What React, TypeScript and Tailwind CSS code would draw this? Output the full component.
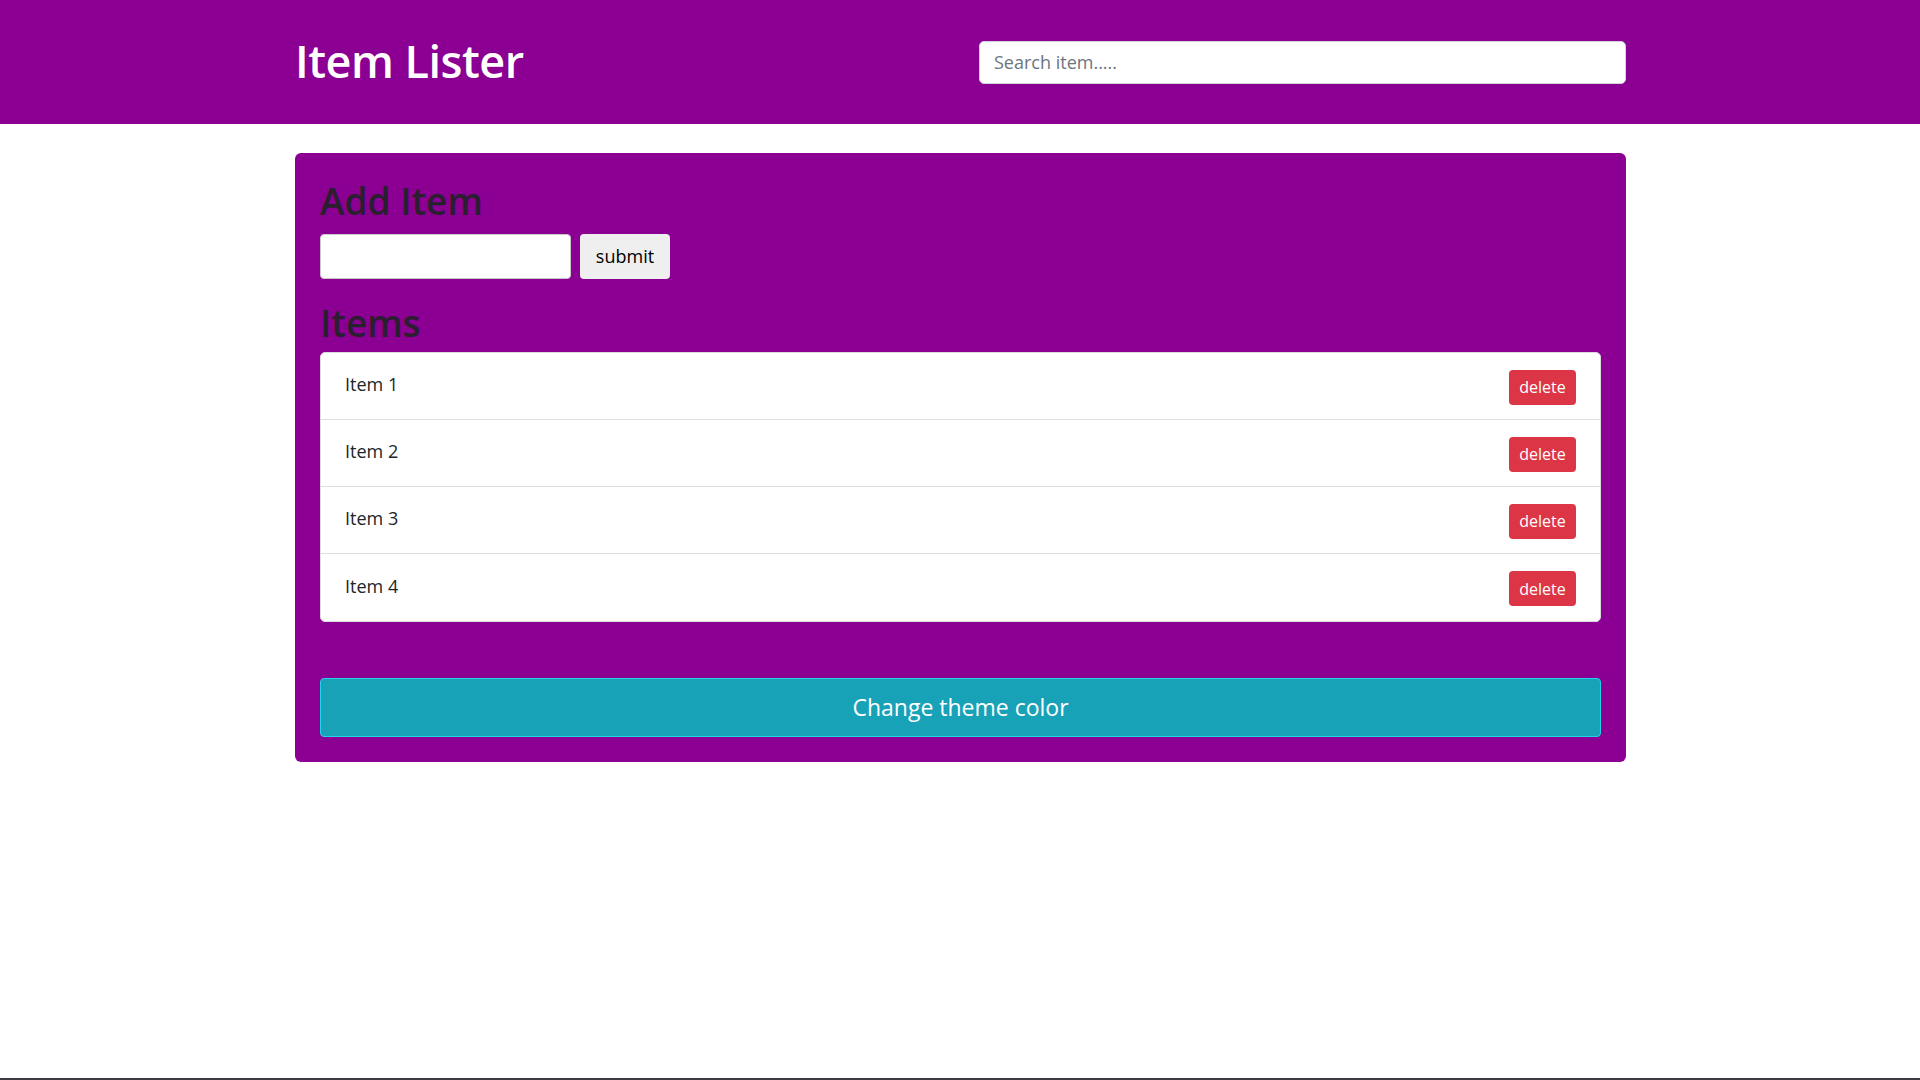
import { useState } from "react";

const initial = ["Item 1", "Item 2", "Item 3", "Item 4"];

export default function App() {
  const [items, setItems] = useState(initial);
  const [text, setText] = useState("");

  return (
    <div className="min-h-screen bg-white" style={{ fontFamily: '"Open Sans", "Noto Sans", sans-serif' }}>
      <header className="h-[124px] bg-[#8b0093]">
        <div className="ml-[295px] mr-[294px] flex h-full items-center justify-between">
          <h1 className="-mt-[4px] text-[45px] font-semibold leading-none tracking-[-0.5px] text-white">Item Lister</h1>
          <input
            className="h-[43px] w-[647px] rounded-[5px] border border-[#ced4da] bg-white px-[14px] text-[18px] text-[#495057] outline-none placeholder:text-[#6c757d]"
            placeholder="Search item....."
          />
        </div>
      </header>

      <main className="ml-[295px] mr-[294px] mt-[29px] rounded-[6px] bg-[#8b0093] px-[25px] pb-[25px] pt-[25px]">
        <h2 className="text-[37px] font-semibold leading-[45px] text-[#2a1f2e]">Add Item</h2>
        <form
          className="mt-[11px] flex gap-[9px]"
          onSubmit={(e) => {
            e.preventDefault();
            if (text.trim()) setItems([...items, text.trim()]);
            setText("");
          }}
        >
          <input
            value={text}
            onChange={(e) => setText(e.target.value)}
            className="h-[45px] w-[251px] rounded-[4px] border border-[#c9c9c9] bg-white px-2 text-[18px] outline-none"
          />
          <button className="h-[45px] w-[90px] rounded-[4px] bg-[#efefef] text-[18px] text-black">submit</button>
        </form>

        <h2 className="mt-[21px] text-[37px] font-semibold leading-[45px] text-[#2a1f2e]">Items</h2>
        <ul className="mt-[7px] overflow-hidden rounded-[5px] border border-[#dcdcdc] bg-white">
          {items.map((item, i) => (
            <li
              key={i}
              className="flex h-[67px] items-center justify-between border-b border-[#dedede] pl-[24px] pr-[24px] last:border-b-0"
            >
              <span className="-mt-[3px] text-[18px] text-[#212529]">{item}</span>
              <button
                onClick={() => setItems(items.filter((_, j) => j !== i))}
                className="mt-[2px] h-[35px] w-[67px] rounded-[4px] bg-[#dc3545] text-[16px] text-white"
              >
                delete
              </button>
            </li>
          ))}
        </ul>

        <button className="mt-[56px] h-[59px] w-full rounded-[4px] border border-[#22d3e6] bg-[#17a2b8] text-[23px] text-white">
          Change theme color
        </button>
      </main>

      <div className="fixed bottom-0 left-0 h-[2px] w-full bg-[#3b3d42]" />
    </div>
  );
}
